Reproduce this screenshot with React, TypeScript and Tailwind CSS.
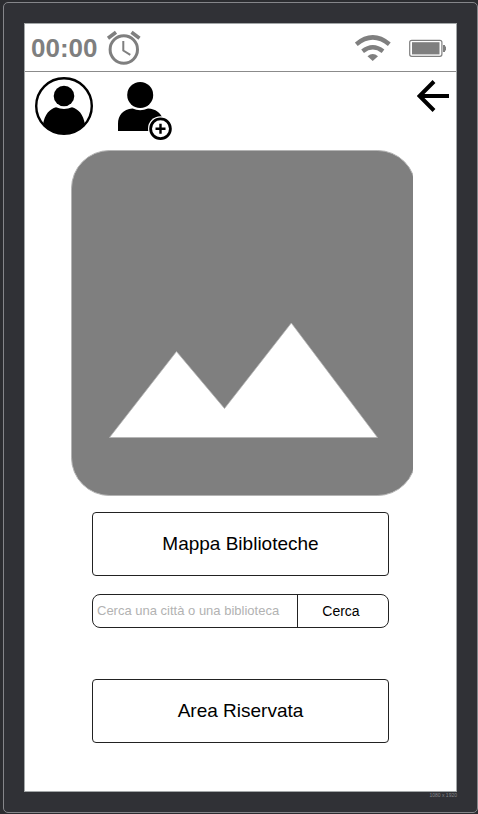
function AlarmIcon() {
  return (
    <svg className="h-9 w-9" viewBox="107 30 36 36" fill="none" stroke="#7f7f7f" aria-hidden="true">
      <circle cx="124.800" cy="49.500" r="13.700" strokeWidth="3" />
      <path d="M124.300 41v9.500l7 4.300" strokeWidth="2" />
      <path d="M109 38.300l8-6M132.500 32.300l8 6" strokeWidth="3.600" />
    </svg>
  );
}

function WifiIcon() {
  return (
    <svg className="h-7 w-9" viewBox="355 34 36 28" fill="none" stroke="#7f7f7f" strokeWidth="4.400" aria-hidden="true">
      <path d="M356.300 44.200Q372.800 30.500 389.300 44.200" />
      <path d="M362.600 51.200Q372.800 43.200 383 51.200" />
      <path d="M367.500 56.300Q372.700 51.800 378 56.300L372.700 61Z" fill="#7f7f7f" stroke="none" />
    </svg>
  );
}

function BatteryIcon() {
  return (
    <svg className="h-[18px] w-[38px]" viewBox="409 39 38 18" aria-hidden="true">
      <rect x="409.700" y="40.300" width="32.200" height="16" rx="2" fill="none" stroke="#7f7f7f" strokeWidth="1.200" />
      <rect x="412" y="42.200" width="27.500" height="12.200" fill="#7f7f7f" />
      <path d="M443 45h2v1.500h1v4h-1v1.500h-2z" fill="#7f7f7f" />
    </svg>
  );
}

function ProfileIcon() {
  return (
    <svg className="h-[58px] w-[58px]" viewBox="35 77 58 58" aria-hidden="true">
      <circle cx="64" cy="106" r="27.800" fill="none" stroke="#000" strokeWidth="2.400" />
      <circle cx="64" cy="96" r="10.300" />
      <path d="M43 125C44.500 114 50 109 56 107.300Q64 110.500 72 107.300C78 109 83.500 114 85 125Q76 134 64 134T43 125Z" />
    </svg>
  );
}

function AddUserIcon() {
  return (
    <svg className="h-[58px] w-[56px]" viewBox="117 82 56 58" aria-hidden="true">
      <circle cx="140.200" cy="95" r="13" />
      <path d="M118 131v-7C118 115 123 109.500 132.500 108.500Q140 112 148 108.500C156 109 160 112.500 162.500 118V131Z" />
      <circle cx="160.500" cy="128.700" r="12.500" fill="#fff" />
      <circle cx="160.500" cy="128.700" r="9.900" fill="#fff" stroke="#000" strokeWidth="2.800" />
      <path d="M155.500 128.700h10M160.500 123.700v10" stroke="#000" strokeWidth="2.400" />
    </svg>
  );
}

function BackIcon() {
  return (
    <svg className="h-8 w-8" viewBox="417 80 32 32" fill="none" stroke="#000" strokeWidth="4" aria-hidden="true">
      <path d="M449 96H420M434 81.500L419.500 96L434 110.500" />
    </svg>
  );
}

function Picture() {
  return (
    <svg className="block w-full" viewBox="71 150 342 346" role="img" aria-label="Immagine">
      <rect x="71.500" y="150.500" width="344" height="345" rx="38" fill="#7f7f7f" stroke="#b4b4b4" />
      <path d="M109.500 437.500L176.500 351.500L224.500 408.500L291.300 323L377.500 437.500Z" fill="#fff" stroke="#b4b4b4" strokeWidth="0.800" />
    </svg>
  );
}

export default function App() {
  return (
    <div className="flex min-h-screen flex-col bg-[#2b2c30] pt-[2px] pb-px pl-[3px] font-['Liberation_Sans',Arial,sans-serif] text-black">
      <div className="flex grow flex-col rounded-[5px] border border-[#85868a] bg-[#303136] px-5 pt-5">
        <div className="flex grow flex-col border border-[#a3a7a8] bg-white">
          <div className="flex h-12 items-center border-b border-[#8b8b8b] pr-[9px] pl-[6px]">
            <span className="text-[26px] leading-8 font-bold text-[#7f7f7f]">00:00</span>
            <span className="ml-2">
              <AlarmIcon />
            </span>
            <span className="ml-auto">
              <WifiIcon />
            </span>
            <span className="ml-[18px]">
              <BatteryIcon />
            </span>
          </div>
          <header className="flex h-[78px] items-start pt-[5px] pr-[7px] pl-[10px]">
            <button type="button" aria-label="Profilo">
              <ProfileIcon />
            </button>
            <button type="button" aria-label="Aggiungi utente" className="mt-[5px] ml-6">
              <AddUserIcon />
            </button>
            <button type="button" aria-label="Indietro" className="mt-[3px] ml-auto">
              <BackIcon />
            </button>
          </header>
          <main className="flex flex-col pr-[43px] pb-12 pl-[46px]">
            <Picture />
            <div className="mt-4 flex flex-col pr-6 pl-[21px]">
              <button type="button" className="h-16 rounded border border-[#222] text-[19px] leading-6">
                Mappa Biblioteche
              </button>
              <form className="mt-[18px] flex h-[34px] rounded-lg border border-[#222]" onSubmit={(e) => e.preventDefault()}>
                <input
                  type="text"
                  aria-label="Cerca una città o una biblioteca"
                  placeholder="Cerca una città o una biblioteca"
                  className="w-0 grow border-r border-[#222] pl-1 text-[13px] leading-5 outline-none placeholder:text-[#b2b2b2]"
                />
                <button type="submit" className="w-[90px] pr-1 text-sm">
                  Cerca
                </button>
              </form>
              <button type="button" className="mt-[51px] h-16 rounded border border-[#222] text-[19px] leading-6">
                Area Riservata
              </button>
            </div>
          </main>
        </div>
        <div className="h-5 text-right text-[5px] leading-[6px] text-[#85868a]">1080 x 1920</div>
      </div>
    </div>
  );
}
